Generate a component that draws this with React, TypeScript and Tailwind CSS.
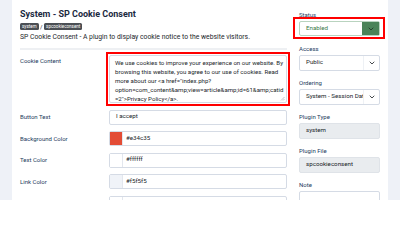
import { ChevronDown } from "lucide-react";

const labelCls = "text-[6px] leading-[8px] text-[#233a5e]";
const inputCls =
  "flex h-[15px] w-[178px] items-center rounded-[2px] border border-[#d5dbe5] bg-white text-[6.2px] text-[#22262a]";

const cookieText = [
  "We use cookies to improve your experience on our website. By",
  "browsing this website, you agree to our use of cookies. Read",
  'more about our <a href="index.php?',
  "option=com_content&amp;view=article&amp;id=61&amp;catid",
  '=2">Privacy Policy</a>.',
];

const SelectBox = ({ value }: { value: string }) => {
  return (
    <div className="flex h-[16px] items-center rounded-[2px] border border-[#d5dbe5] bg-white">
      <span className="flex-1 overflow-hidden whitespace-nowrap pl-[6px] text-[6.2px] text-[#22262a]">
        {value}
      </span>
      <span className="flex h-full w-[16px] shrink-0 items-center justify-center border-l border-[#eef1f5]">
        <ChevronDown size={8} strokeWidth={2.5} className="text-[#22262a]" />
      </span>
    </div>
  );
};

const ColorRow = ({ label, color, value }: { label: string; color: string; value: string }) => {
  return (
    <div className="mt-[6.5px] flex items-center">
      <span className={`w-[89px] ${labelCls}`}>{label}</span>
      <div className={inputCls}>
        <span
          className="h-[13px] w-[13px] shrink-0 border-r border-[#e3e7ee]"
          style={{ backgroundColor: color }}
        />
        <span className="ml-[3px]">{value}</span>
      </div>
    </div>
  );
};

const App = () => {
  return (
    <div className="flex h-[200px] w-[400px] overflow-hidden bg-[#eef1f7] font-['Roboto',sans-serif]">
      <div className="w-[12px] shrink-0" />
      <div className="flex w-[376px] shrink-0 bg-white pl-[8px]">
        {/* main form */}
        <div className="w-[271px] shrink-0 pt-[8px]">
          <h1 className="text-[9px] font-bold leading-[12px] text-[#1b2a3f]">
            System - SP Cookie Consent
          </h1>
          <div className="mt-[3px] flex h-[7px] items-center">
            <span className="rounded-[1.5px] bg-[#4b4f54] px-[2px] text-[4.5px] leading-[7px] text-white">
              system
            </span>
            <span className="mx-[1.5px] text-[6px] leading-[7px] text-[#22262a]">/</span>
            <span className="rounded-[1.5px] bg-[#4b4f54] px-[2px] text-[4.5px] leading-[7px] text-white">
              spcookieconsent
            </span>
          </div>
          <p className="mt-[2.5px] whitespace-nowrap text-[6.8px] leading-[8px] text-[#22262a]">
            SP Cookie Consent - A plugin to display cookie notice to the website visitors.
          </p>
          <div className="mt-[7px] h-[2px] w-[267px] bg-[#eef0f3]" />

          <div className="mt-[2px] flex">
            <span className={`w-[86px] pt-[5px] ${labelCls}`}>Cookie Content</span>
            <div className="w-[184px] border-2 border-[#ff0000] p-[1px]">
              <div className="relative h-[48px] overflow-hidden rounded-[2px] border border-[#d5dbe5] px-[5px] pt-[2px]">
                {cookieText.map((line) => (
                  <div key={line} className="whitespace-nowrap text-[6.1px] leading-[9px] text-[#22262a]">
                    {line}
                  </div>
                ))}
                <svg
                  className="absolute bottom-[1px] right-[1px]"
                  width="5"
                  height="5"
                  viewBox="0 0 5 5"
                >
                  <path d="M4.5 1 L1 4.5 M4.5 3 L3 4.5" stroke="#9aa0a8" strokeWidth="0.6" />
                </svg>
              </div>
            </div>
          </div>

          <div className="mt-[4px] flex items-center">
            <span className={`w-[89px] ${labelCls}`}>Button Text</span>
            <div className={`${inputCls} pl-[6px]`}>I accept</div>
          </div>
          <ColorRow label="Background Color" color="#e34c35" value="#e34c35" />
          <ColorRow label="Text Color" color="#ffffff" value="#ffffff" />
          <ColorRow label="Link Color" color="#f0f3f8" value="#f5f5f5" />
          <ColorRow label="Button Background Color" color="#ffffff" value="#e34c35" />
        </div>

        {/* sidebar */}
        <div className="ml-[2px] w-[92px] shrink-0 pt-[11px]">
          <div className={`ml-[6px] ${labelCls}`}>Status</div>
          <div className="-mt-[2px] border-2 border-[#ff0000] pb-[1px] pl-[4px] pr-[3px] pt-[2px]">
            <div className="flex h-[15px] items-center rounded-[2px] border border-[#b9d3bf] bg-white">
              <span className="flex-1 pl-[6px] text-[6.2px] text-[#3a7a4a]">Enabled</span>
              <span className="flex h-full w-[17px] items-center justify-center bg-[#4a8358]">
                <ChevronDown size={8} strokeWidth={2.5} className="text-[#1e3324]" />
              </span>
            </div>
          </div>

          <div className="ml-[6px] mr-[5px]">
            <div className={`mt-[6px] ${labelCls}`}>Access</div>
            <div className="mt-[2px]">
              <SelectBox value="Public" />
            </div>

            <div className={`mt-[8px] ${labelCls}`}>Ordering</div>
            <div className="mt-[2px]">
              <SelectBox value="System - Session Data" />
            </div>

            <div className={`mt-[8px] ${labelCls}`}>Plugin Type</div>
            <div className="mt-[2px] flex h-[16px] items-center rounded-[2px] border border-[#dfe3e8] bg-[#e9ecef] pl-[6px] text-[6.2px] text-[#22262a]">
              system
            </div>

            <div className={`mt-[8px] ${labelCls}`}>Plugin File</div>
            <div className="mt-[2px] flex h-[16px] items-center rounded-[2px] border border-[#dfe3e8] bg-[#e9ecef] pl-[6px] text-[6.2px] text-[#22262a]">
              spcookieconsent
            </div>

            <div className={`mt-[8px] ${labelCls}`}>Note</div>
            <div className="mt-[2px] h-[16px] rounded-[2px] border border-[#d5dbe5] bg-white" />
          </div>
        </div>
      </div>
      <div className="flex-1" />
    </div>
  );
};

export default App;
